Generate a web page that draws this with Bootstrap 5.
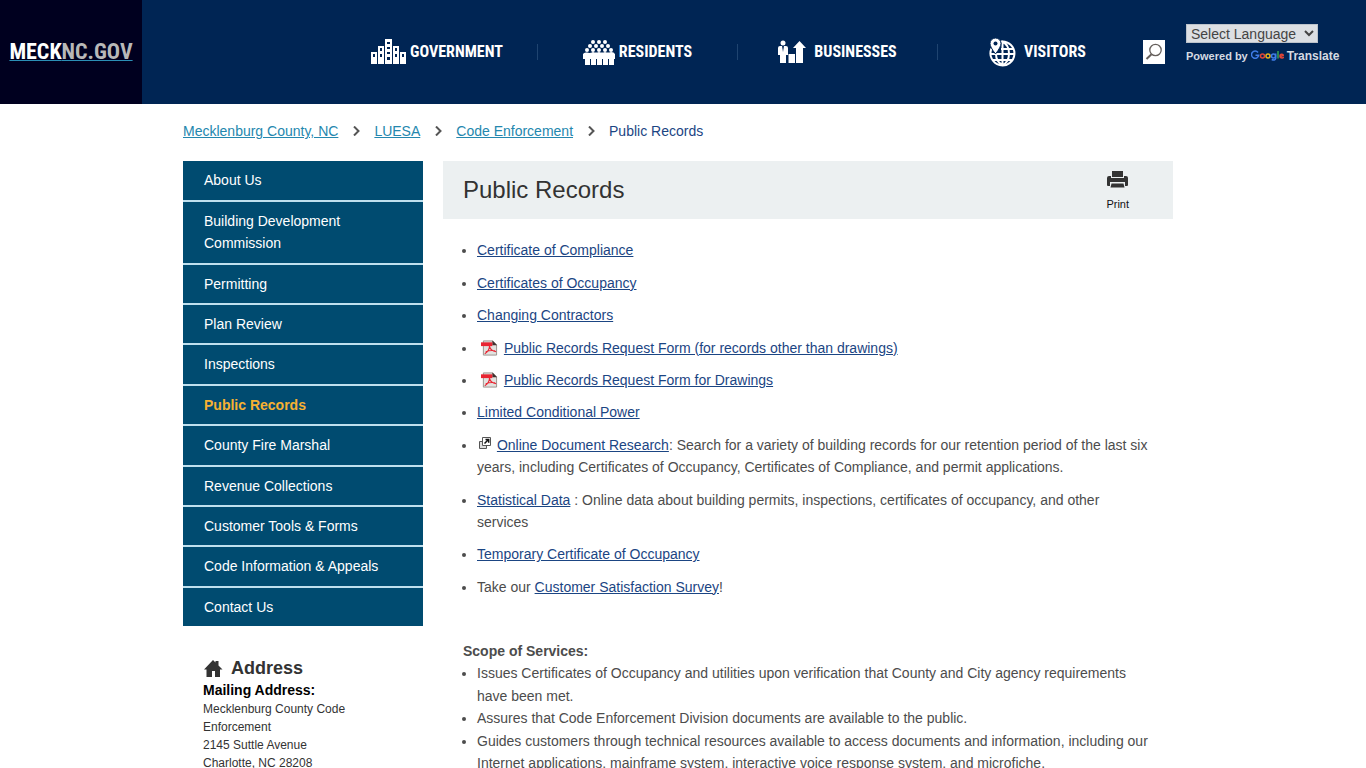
<!DOCTYPE html>
<html lang="en">
<head>
<meta charset="utf-8">
<meta name="viewport" content="width=device-width, initial-scale=1">
<title>Public Records</title>
<link rel="stylesheet" href="https://cdn.jsdelivr.net/npm/bootstrap@5.3.0/dist/css/bootstrap.min.css">
<style>
body{font:14px/1.6 "Liberation Sans",Arial,sans-serif;color:#4c4c4c}
.site-header{background:#002554;min-height:104px}
.brand{width:142px;background:#00001f;font:bold 22px/24px "Liberation Sans Narrow","Roboto Condensed",sans-serif;color:#2b8fb5}
.brand .light{color:#b8b8b8}
.brand .name{text-decoration:underline 1px}
.main-nav{margin-right:6px}
.main-nav li{width:200px;height:16px}
.main-nav li+li{border-left:1px solid #1f4470}
.main-nav a{font:bold 16px/24px "Liberation Sans Narrow","Roboto Condensed",sans-serif;color:#fff}
.search-btn{width:22px;height:24px;margin-right:21px}
.translate{width:180px;padding-bottom:16px;font-size:11px;line-height:16px;color:#d5dbe2}
.translate select{width:132px;height:19px;background:#dcdfe3;border:1px solid #bcc3cb;color:#444;font-size:14px;line-height:16px}
.translate .word{font-size:12px}
.translate .credit{gap:3px;margin-top:5px}
.page-wrap{max-width:1000px;padding-right:10px}
.crumbs{padding:16px 0 19px}
.crumbs a{color:#2487ae}
.crumbs .here{color:#1b4583}
.crumbs svg{margin:0 14px 0 15px}
.columns{gap:20px}
.side{flex:0 0 240px}
.side-nav a{display:block;background:#004b70;color:#fff;padding:8px 60px 8px 21px}
.side-nav .wide{padding-right:20px}
.side-nav li+li{border-top:2px solid #bfe0ee}
.side-nav .current{color:#f6b132;font-weight:bold}
.address{padding:30px 20px 0;font-size:12px;line-height:18px;color:#333}
.address h2{font-size:18px;line-height:24px;font-weight:bold;color:#333}
.address h3{font-size:14px;line-height:20px;font-weight:bold;color:#000}
.title-bar{background:#ecf0f1;height:58px;padding:0 44px 0 20px}
.title-bar h1{font-size:24px;line-height:32px;color:#333}
.print-btn{font-size:11px;line-height:16px;color:#111;padding:2px 0 0}
.content{padding:20px 20px 0}
.content ul{padding-left:14px}
.content a{color:#1b4583}
.records li{margin-bottom:10px}
.pdf-icon{margin:0 2px 0 4px}
.scope{padding-top:32px}
</style>
</head>
<body>
<header class="site-header d-flex align-items-stretch">
  <a class="brand d-flex align-items-center justify-content-center text-decoration-none" href="#"><span class="name"><span class="text-white">MECK</span><span class="light">NC.GOV</span></span></a>
  <nav class="ms-auto d-flex align-items-center" aria-label="Main">
    <ul class="main-nav list-unstyled d-flex mb-0">
      <li class="d-flex align-items-center justify-content-center"><a class="d-flex align-items-center gap-1 text-decoration-none" href="#">
        <svg width="35" height="26" viewBox="0 0 35 26"><path fill="#fff" d="M0 13h6v12H0zM7 7h6v18H7zM14 0h7v25h-7zM22 7h6v18h-6zM29 13h6v12h-6z"/><path fill="#002554" d="M2 15h2v3H2zM9 9h2v3H9zM9 15h2v3H9zM16 3h3v2h-3zM16 8h3v2h-3zM16 13h3v2h-3zM16 18h3v3h-3zM24 9h2v3h-2zM24 15h2v3h-2zM31 15h2v3h-2z"/></svg>GOVERNMENT</a></li>
      <li class="d-flex align-items-center justify-content-center"><a class="d-flex align-items-center gap-1 text-decoration-none" href="#">
        <svg width="32" height="25" viewBox="0 0 32 25" fill="#fff"><g><circle cx="10" cy="2" r="2"/><circle cx="16" cy="2" r="2"/><circle cx="22" cy="2" r="2"/><circle cx="7" cy="6" r="2"/><circle cx="13" cy="6" r="2"/><circle cx="19" cy="6" r="2"/><circle cx="25" cy="6" r="2"/><circle cx="4" cy="10" r="2"/><circle cx="10" cy="10" r="2"/><circle cx="16" cy="10" r="2"/><circle cx="22" cy="10" r="2"/><circle cx="28" cy="10" r="2"/></g><path d="M0 14q1-2 4-1.500 3 1 6-.5 3 1 6 0 3 1 6 0 3 1 6 0 3 0 4 2v5h-1v6h-5v-6h-1v6h-5v-6h-1v6h-5v-6h-1v6H8v-6H7v6H2v-6H0z"/></svg>RESIDENTS</a></li>
      <li class="d-flex align-items-center justify-content-center"><a class="d-flex align-items-center gap-2 text-decoration-none" href="#">
        <svg width="28" height="24" viewBox="0 0 28 24"><path fill="#fff" d="M2 6h6q2 0 2 2v7H8v8H2v-8H0V8q0-2 2-2zM10.500 14h6.500v9h-6.500zM18 8h-3l6.500-7L28 8h-3v15h-7z"/><circle cx="5" cy="3" r="2.500" fill="#fff"/><path fill="#002554" d="M4 6h2l-1 6z"/></svg>BUSINESSES</a></li>
      <li class="d-flex align-items-center justify-content-center"><a class="d-flex align-items-center gap-2 text-decoration-none" href="#">
        <svg width="27" height="30" viewBox="0 0 27 30" fill="none" stroke="#fff" stroke-width="2"><path d="M12 4.500a12 12 0 1 1-9.500 7"/><path d="M13 4.500q7 3 7 12T13.500 28Q7 25 7 17M13.500 4.500V28M12 12h12M1.500 17h24M3 23h21"/><path fill="#fff" stroke="#002554" stroke-width="1" d="M6.500 17Q1 10 1 6.500a5.500 5.500 0 0 1 11 0Q12 10 6.500 17z"/><circle cx="6.500" cy="6.500" r="2" fill="#002554" stroke="none"/></svg>VISITORS</a></li>
    </ul>
    <button class="search-btn border-0 bg-white p-0 d-flex align-items-center justify-content-center" type="button" aria-label="Search"><svg width="18" height="18" viewBox="0 0 18 18" fill="none" stroke="#66605c" stroke-width="1.300"><circle cx="10.500" cy="7" r="5.700"/><path stroke-width="2" d="M6.500 11.200L1.500 16"/></svg></button>
    <div class="translate fw-bold">
      <select class="d-block p-0" aria-label="Language"><option>Select Language</option></select>
      <div class="credit d-flex align-items-center">Powered by
        <svg width="33" height="12" viewBox="0 0 33 12" fill="none" stroke-width="1.500"><path stroke="#3f7de8" d="M7 2.500A3.600 3.600 0 1 0 7.700 5.200H4.500"/><circle cx="11.500" cy="6" r="2" stroke="#df4638"/><circle cx="17" cy="6" r="2" stroke="#e9b11b"/><circle cx="22.500" cy="6" r="2" stroke="#3f7de8"/><path stroke="#3f7de8" d="M24.700 3.500v5q-.7 2.500-4 1"/><path stroke="#36a456" d="M27 1v7.500"/><path stroke="#df4638" d="M29 6.700l3.500-1.500q-2-2-3.300-.2-.8 3 2 3 1 0 1.600-1"/></svg>
        <span class="word">Translate</span></div>
    </div>
  </nav>
</header>
<div class="page-wrap container-fluid ps-0">
  <nav class="crumbs d-flex align-items-center" aria-label="Breadcrumb">
    <a href="#">Mecklenburg County, NC</a><svg width="7" height="10" viewBox="0 0 7 10" fill="none" stroke="#555" stroke-width="2"><path d="M1 .5L5.500 5 1 9.500"/></svg>
    <a href="#">LUESA</a><svg width="7" height="10" viewBox="0 0 7 10" fill="none" stroke="#555" stroke-width="2"><path d="M1 .5L5.500 5 1 9.500"/></svg>
    <a href="#">Code Enforcement</a><svg width="7" height="10" viewBox="0 0 7 10" fill="none" stroke="#555" stroke-width="2"><path d="M1 .5L5.500 5 1 9.500"/></svg>
    <span class="here">Public Records</span>
  </nav>
  <div class="columns d-flex">
    <aside class="side">
      <ul class="side-nav list-unstyled mb-0">
        <li><a class="text-decoration-none" href="#">About Us</a></li>
        <li><a class="text-decoration-none" href="#">Building Development Commission</a></li>
        <li><a class="text-decoration-none" href="#">Permitting</a></li>
        <li><a class="text-decoration-none" href="#">Plan Review</a></li>
        <li><a class="text-decoration-none" href="#">Inspections</a></li>
        <li><a class="text-decoration-none current" href="#">Public Records</a></li>
        <li><a class="text-decoration-none" href="#">County Fire Marshal</a></li>
        <li><a class="text-decoration-none" href="#">Revenue Collections</a></li>
        <li><a class="text-decoration-none wide" href="#">Customer Tools &amp; Forms</a></li>
        <li><a class="text-decoration-none wide" href="#">Code Information &amp; Appeals</a></li>
        <li><a class="text-decoration-none" href="#">Contact Us</a></li>
      </ul>
      <section class="address">
        <h2 class="d-flex align-items-center gap-2 mb-0"><svg width="20" height="17" viewBox="0 0 20 17" fill="#333"><path d="M1 9.500L10 0l2.500 2.500V1h3v4.500l4 4H17V17h-5v-6H9v6H3.500V9.500z"/></svg>Address</h2>
        <h3 class="mb-0">Mailing Address:</h3>
        <address class="mb-0">Mecklenburg County Code Enforcement<br>2145 Suttle Avenue<br>Charlotte, NC 28208</address>
      </section>
    </aside>
    <main class="flex-grow-1">
      <div class="title-bar d-flex align-items-center justify-content-between">
        <h1 class="mb-0">Public Records</h1>
        <button class="print-btn border-0 bg-transparent d-flex flex-column align-items-center gap-2" type="button"><svg width="21" height="17" viewBox="0 0 21 17" fill="#333"><path d="M5 0h11v6H5zM2 5h2v2h13V5h2q2 0 2 2v7q0 1-1 1h-2v-4H3v4H1q-1 0-1-1V7q0-2 2-2zM4.500 12.500h12l1 4h-14z"/></svg>Print</button>
      </div>
      <div class="content">
        <ul class="records mb-0">
          <li><a href="#">Certificate of Compliance</a></li>
          <li><a href="#">Certificates of Occupancy</a></li>
          <li><a href="#">Changing Contractors</a></li>
          <li><svg class="pdf-icon align-text-bottom" width="17" height="16" viewBox="0 0 18 16"><path d="M2.500.5h10l4 4v11h-14z" fill="#e2e2df" stroke="#99918b"/><path d="M12 0l5 5h-5z" fill="#40302e"/><path d="M0 2h12v4H0z" fill="#e92532"/><path d="M9 6q0 5-5 8M9 6q1 5 7 6M5 12q5-2 10-1" fill="none" stroke="#e92532" stroke-width="1.200"/></svg> <a href="#">Public Records Request Form (for records other than drawings)</a></li>
          <li><svg class="pdf-icon align-text-bottom" width="17" height="16" viewBox="0 0 18 16"><path d="M2.500.5h10l4 4v11h-14z" fill="#e2e2df" stroke="#99918b"/><path d="M12 0l5 5h-5z" fill="#40302e"/><path d="M0 2h12v4H0z" fill="#e92532"/><path d="M9 6q0 5-5 8M9 6q1 5 7 6M5 12q5-2 10-1" fill="none" stroke="#e92532" stroke-width="1.200"/></svg> <a href="#">Public Records Request Form for Drawings</a></li>
          <li><a href="#">Limited Conditional Power</a></li>
          <li><svg class="align-baseline" width="16" height="13" viewBox="0 0 16 13" fill="none" stroke="#555"><path fill="#ddd" d="M2.500 4.500h7v7h-7z"/><path fill="#fff" d="M5.500.5h8v8h-8z"/><path stroke="#111" stroke-width="1.500" d="M7.500 6.500l4-4M8.500 2.500h3.200v3.200"/></svg> <a href="#">Online Document Research</a>: Search for a variety of building records for our retention period of the last six years, including Certificates of Occupancy, Certificates of Compliance, and permit applications.</li>
          <li><a href="#">Statistical Data</a> : Online data about building permits, inspections, certificates of occupancy, and other services</li>
          <li><a href="#">Temporary Certificate of Occupancy</a></li>
          <li>Take our <a href="#">Customer Satisfaction Survey</a>!</li>
        </ul>
        <section class="scope">
          <strong class="d-block">Scope of Services:</strong>
          <ul class="mb-0">
            <li>Issues Certificates of Occupancy and utilities upon verification that County and City agency requirements have been met.</li>
            <li>Assures that Code Enforcement Division documents are available to the public.</li>
            <li>Guides customers through technical resources available to access documents and information, including our Internet applications, mainframe system, interactive voice response system, and microfiche.</li>
          </ul>
        </section>
      </div>
    </main>
  </div>
</div>
<script src="https://cdn.jsdelivr.net/npm/bootstrap@5.3.0/dist/js/bootstrap.bundle.min.js"></script>
</body>
</html>
